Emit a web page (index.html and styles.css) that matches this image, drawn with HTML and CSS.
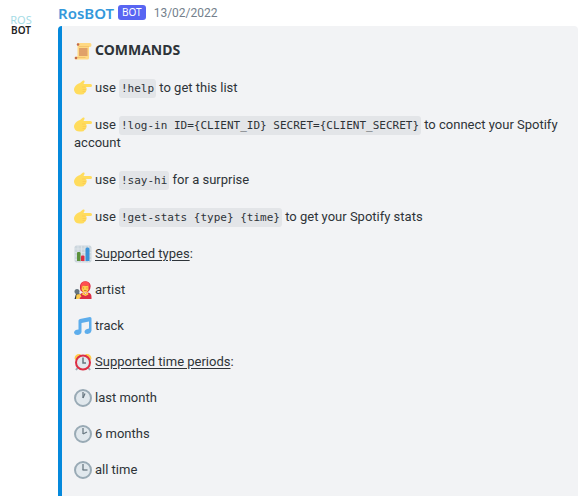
FILE: index.html
```html
<!DOCTYPE html>
<html lang="en">
<head>
<meta charset="utf-8">
<meta name="viewport" content="width=device-width, initial-scale=1">
<title>RosBOT</title>
<link rel="stylesheet" href="styles.css">
</head>
<body>
<svg class="sprite" aria-hidden="true">
  <symbol id="scroll" viewBox="0 0 36 36">
    <path fill="#ffd983" d="M8 2h24q3 0 3 4t-3 4h-2v22q0 3-3 3H4q-3 0-3-3t3-3h3V8Q5 2 8 2z"/>
    <path fill="#e9b05a" d="M10 9h20v1H10zM4 30h19v1H5z"/>
    <circle cx="8" cy="5" r="2.5" fill="#c1694f"/>
    <circle cx="4" cy="32" r="2.5" fill="#c1694f"/>
    <path stroke="#c1694f" stroke-width="2" d="M10 14h17M10 18h17M10 22h17M10 26h17"/>
  </symbol>
  <symbol id="point" viewBox="0 0 36 36">
    <path fill="#ffdc5d" d="M1 17Q4 10 12 8l6-5q4-1 3 3l-2 4h14q3 0 3 3t-3 3H23q3 1 2 4 1 2-1 4 0 3-3 4-1 3-6 3H11Q3 31 1 25q-2-4 0-8z"/>
    <path fill="none" stroke="#f9c04f" stroke-width="1" d="M23 16h-7M24 21h-7M23 25h-6"/>
  </symbol>
  <symbol id="chart" viewBox="0 0 36 36">
    <rect x="1" y="1" width="34" height="34" rx="4" fill="#ccd6dd"/>
    <path stroke="#e1e8ed" stroke-width="1.5" d="M1 8h34M1 15h34M1 22h34M1 29h34M8 1v34M15 1v34M22 1v34M29 1v34"/>
    <path fill="#5c913b" d="M6 32V16q0-2 2-2h3q2 0 2 2v16z"/>
    <path fill="#dd2e44" d="M14 32V23q0-2 2-2h3q2 0 2 2v9z"/>
    <path fill="#3b94d9" d="M23 32V8q0-3 3-3h2q3 0 3 3v24z"/>
  </symbol>
  <symbol id="singer" viewBox="0 0 36 36">
    <path fill="#dd2e44" d="M13 19Q9 5 19 1q11-2 14 7 1 6-3 12l-4 3-9-1z"/>
    <path fill="#ffcc4d" d="M16 8q5 2 13 1v8q-2 6-7 6t-7-7z"/>
    <path fill="#ff5050" d="M14 10Q14 1 23 1q9 1 8 11l-6-4-8 2-1 5z"/>
    <path fill="#dd2e44" d="M11 36V30q1-6 8-7l4 3 5-3q7 1 7 9v4z"/>
    <path fill="#ffcc4d" d="m18 22 5 5 4-5 2 5-6 3-7-3z"/>
    <path fill="#31373d" d="m5 23 8 3-7 10H1l2-7z"/>
    <circle cx="6" cy="21" r="5" fill="#66757f"/>
    <path fill="#ffcc4d" d="m5 27 7-1 3 5-6 5H4z"/>
    <path stroke="#c98a2b" stroke-width="2" d="M19 13v2M26 13v2M20 19h5"/>
  </symbol>
  <symbol id="notes" viewBox="0 0 36 36">
    <path fill="#5dadec" d="m12 4 20-4q3 0 3 3v24q-1 6-8 7-6 0-6-5 1-5 9-6V9l-15 3v18q-1 5-8 6-6 0-7-5 1-6 9-6V7q0-2 3-3z"/>
  </symbol>
  <symbol id="alarm" viewBox="0 0 36 36">
    <path fill="#ffcc4d" d="M1 11Q2 1 12 2l3 3L4 15zM35 11Q34 1 24 2l-3 3 11 10z"/>
    <path stroke="#99aab5" stroke-width="4" d="m7 30-3 4M29 30l3 4"/>
    <circle cx="18" cy="19" r="14" fill="#e1e8ed" stroke="#dd2e44" stroke-width="4"/>
    <path fill="none" stroke="#66757f" stroke-width="3" d="M18 9v11h6"/>
  </symbol>
  <symbol id="clock" viewBox="0 0 36 36">
    <circle cx="18" cy="18" r="16" fill="#e1e8ed" stroke="#99aab5" stroke-width="4"/>
    <path stroke="#66757f" stroke-width="2.5" d="M18 6v12"/>
  </symbol>
</svg>
<article class="message">
  <div class="avatar"><span class="avatar-top">ROS</span><span class="avatar-bottom">BOT</span></div>
  <div class="content">
    <header class="head">
      <span class="name">RosBOT</span>
      <span class="tag">BOT</span>
      <time class="date" datetime="2022-02-13">13/02/2022</time>
    </header>
    <div class="embed">
      <section class="commands">
        <p><svg class="emoji"><use href="#scroll"/></svg><strong>COMMANDS</strong></p>
        <p><svg class="emoji"><use href="#point"/></svg>use <code>!help</code> to get this list</p>
        <p><svg class="emoji"><use href="#point"/></svg>use <code>!log-in ID={CLIENT_ID} SECRET={CLIENT_SECRET}</code> to connect your Spotify account</p>
        <p><svg class="emoji"><use href="#point"/></svg>use <code>!say-hi</code> for a surprise</p>
        <p><svg class="emoji"><use href="#point"/></svg>use <code>!get-stats {type} {time}</code> to get your Spotify stats</p>
      </section>
      <section class="options">
        <p><svg class="emoji"><use href="#chart"/></svg><u>Supported types</u>:</p>
        <p><svg class="emoji"><use href="#singer"/></svg>artist</p>
        <p><svg class="emoji"><use href="#notes"/></svg>track</p>
        <p><svg class="emoji"><use href="#alarm"/></svg><u>Supported time periods</u>:</p>
        <p><svg class="emoji" viewBox="0 0 36 36"><use href="#clock"/><path class="hand" d="m18 18 4-9"/></svg>last month</p>
        <p><svg class="emoji" viewBox="0 0 36 36"><use href="#clock"/><path class="hand" d="m18 18 8-4"/></svg>6 months</p>
        <p><svg class="emoji" viewBox="0 0 36 36"><use href="#clock"/><path class="hand" d="M17 18h10"/></svg>all time</p>
      </section>
    </div>
  </div>
</article>
</body>
</html>
```
FILE: styles.css
```css
body {
  margin: 0;
  background: #fff;
  color: #2e3338;
  font: 13px/18px Roboto, "Noto Sans", sans-serif;
}

p {
  margin: 0;
}

.sprite {
  position: absolute;
  width: 0;
  height: 0;
}

.message {
  display: flex;
  gap: 16px;
  padding: 4px 7px 0 0;
}

.avatar {
  display: flex;
  flex: none;
  flex-direction: column;
  width: 42px;
  padding-top: 11px;
  font: 11px/10px "Noto Sans", sans-serif;
  text-align: center;
}

.avatar-top {
  color: #a5dce6;
}

.avatar-bottom {
  color: #222;
  font-size: 10px;
  font-weight: 600;
}

.content {
  flex: 1;
  min-width: 0;
}

.head {
  display: flex;
  align-items: center;
  height: 18px;
  margin-bottom: 4px;
}

.name {
  color: #3498db;
  font: 600 15px/18px "Noto Sans", sans-serif;
}

.tag {
  margin: 0 8px 2px 4px;
  padding: 0 4px;
  border-radius: 3px;
  background: #5865f2;
  color: #fff;
  font: 10px/15px "Noto Sans", sans-serif;
}

.date {
  color: #747f8d;
  font-size: 12px;
}

.embed {
  display: grid;
  gap: 19px;
  padding: 16px 8px 24px 12px;
  border-left: 4px solid #0589dc;
  border-radius: 4px;
  background: #f2f3f5;
}

.commands,
.options {
  display: grid;
  gap: 19px;
}

.options {
  gap: 18px;
}

.emoji {
  width: 18px;
  height: 18px;
  margin-right: 3px;
  vertical-align: top;
}

.hand {
  stroke: #66757f;
  stroke-width: 2.5;
}

strong {
  font: 700 14px/12px "Noto Sans", sans-serif;
}

code {
  padding: 3px 2px;
  border-radius: 3px;
  background: #e3e5e8;
  font: 11px/12px "DejaVu Sans Mono", monospace;
}

u {
  text-underline-offset: 2px;
}
```
